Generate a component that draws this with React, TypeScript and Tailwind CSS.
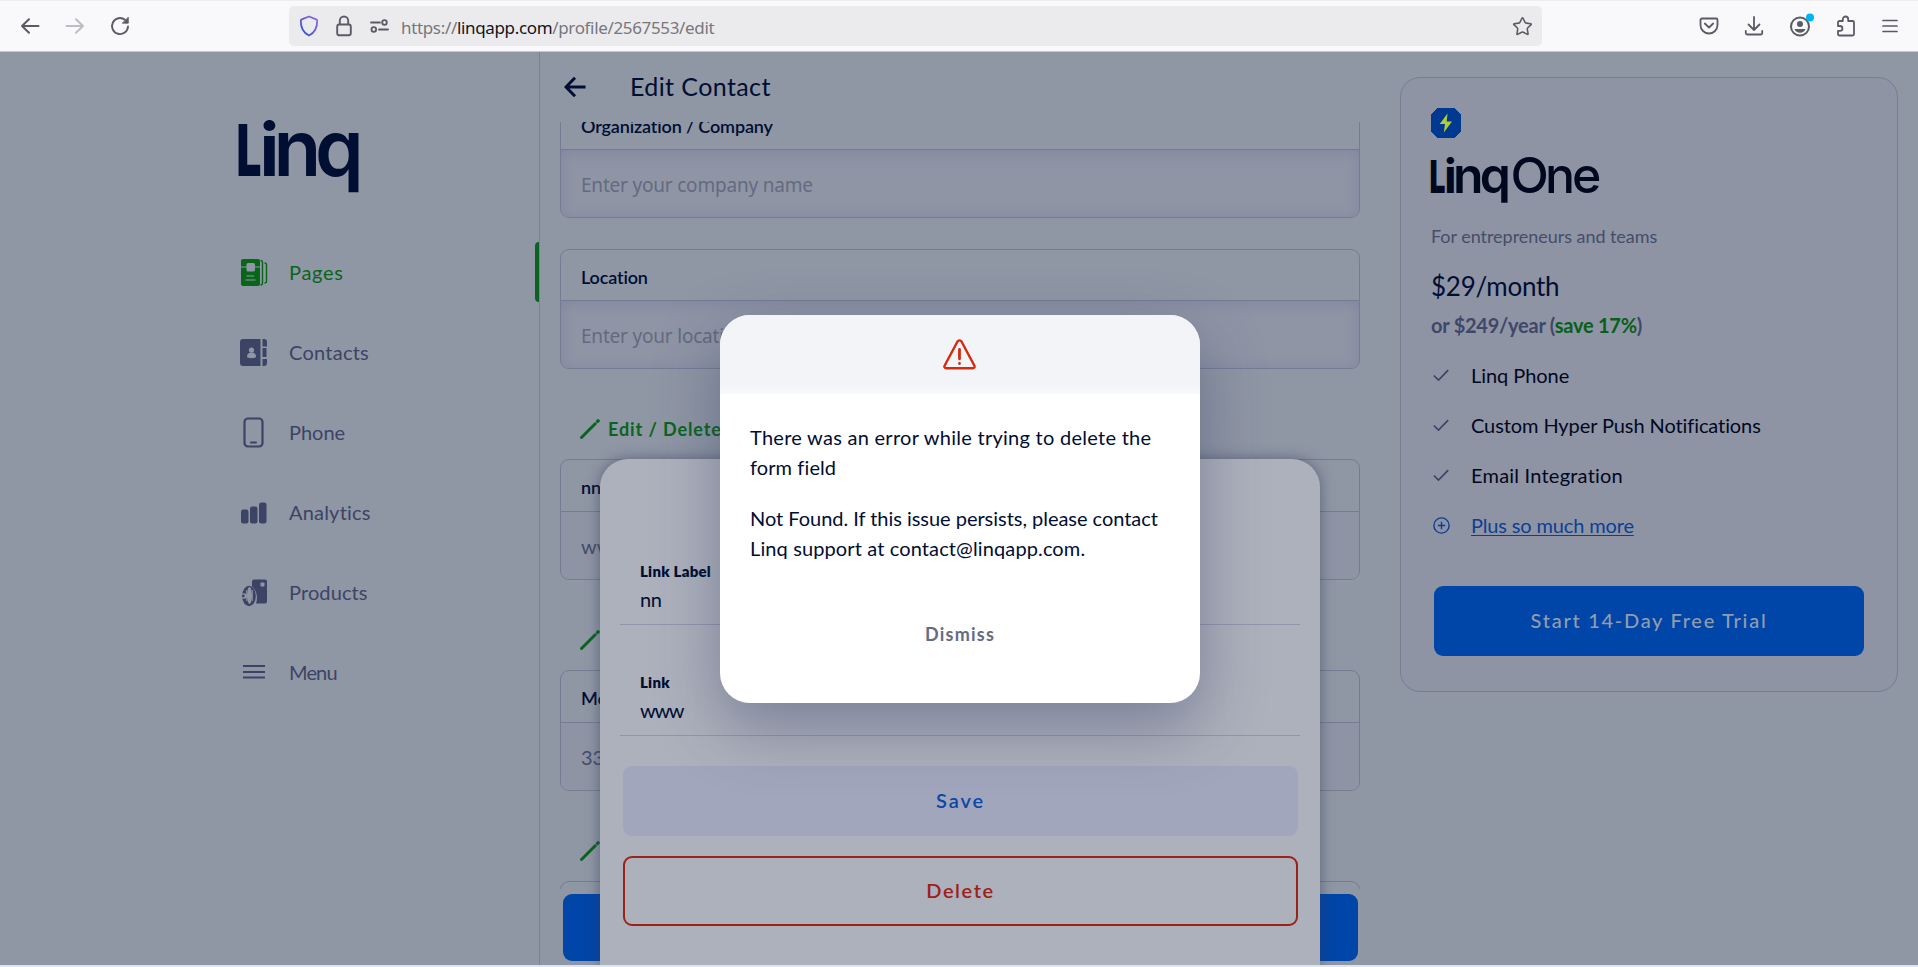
import type { ReactNode } from "react";
import { Star } from "lucide-react";

/* ---------- browser toolbar ---------- */

function Toolbar() {
  return (
    <div className="flex h-[52px] shrink-0 items-center border-t border-b border-t-[#ededf1] border-b-[#c6c7cc] bg-[#f9f9fb] text-[#5b5b66]">
      <div className="flex w-[289px] items-center gap-[25px] pl-[20px]">
        <svg width="20" height="20" viewBox="0 0 20 20" fill="none" stroke="currentColor" strokeWidth="2" strokeLinecap="round" strokeLinejoin="round">
          <path d="M18.5 10H2M9 3.3 2 10l7 6.700" />
        </svg>
        <svg width="20" height="20" viewBox="0 0 20 20" fill="none" stroke="#bdbdc3" strokeWidth="2" strokeLinecap="round" strokeLinejoin="round">
          <path d="M1.500 10H18M11 3.300l7 6.700-7 6.700" />
        </svg>
        <svg width="20" height="20" viewBox="0 0 20 20" fill="none" stroke="currentColor" strokeWidth="1.900" strokeLinecap="round" strokeLinejoin="round">
          <path d="M18 10.500a8 8 0 1 1-3-6.700" />
          <path d="M18.300 1.500v5.700h-5.700z" fill="currentColor" strokeWidth="0.800" />
        </svg>
      </div>
      <div className="flex h-[40px] w-[1253px] items-center rounded-[5px] bg-[#ebebed] pr-[9px] pl-[10px]">
        <svg width="20" height="22" viewBox="0 0 20 22" fill="none" stroke="url(#shieldTone)" strokeWidth="1.800" strokeLinejoin="round">
          <defs>
            <linearGradient id="shieldTone" x1="0" y1="1" x2="1" y2="0">
              <stop offset="0" stopColor="#2f55c8" />
              <stop offset="1" stopColor="#9468dd" />
            </linearGradient>
          </defs>
          <path d="M10 1.500 17.200 4.300a1.500 1.500 0 0 1 1 1.400c.1 6.500-2.400 12-8.200 14.800C4.200 17.700 1.700 12.200 1.800 5.700a1.500 1.500 0 0 1 1-1.400z" />
        </svg>
        <svg className="ml-[17px]" width="16" height="22" viewBox="0 0 16 22" fill="none" stroke="currentColor" strokeWidth="1.900">
          <rect x="1.200" y="9.500" width="13.600" height="10.800" rx="2" />
          <path d="M3.800 9.500V5.700a4.200 4.200 0 0 1 8.400 0v3.800" />
        </svg>
        <svg className="ml-[18px]" width="19" height="14" viewBox="0 0 19 14" fill="none" stroke="currentColor" strokeWidth="1.800" strokeLinecap="round">
          <path d="M1 3.500h9M9 10.500h9" />
          <circle cx="14.500" cy="3.500" r="2.300" />
          <circle cx="3.800" cy="10.500" r="2.300" />
        </svg>
        <div className="ml-[12px] grow pt-[3px] font-['Noto_Sans',sans-serif] text-[17px] leading-[24px] tracking-[-0.34px] text-[#77777d]">
          https://<span className="text-[#15141a]">linqapp.com</span>/profile/2567553/edit
        </div>
        <Star size={21} strokeWidth={1.8} />
      </div>
      <div className="flex grow items-center justify-end gap-[24px] pr-[18px]">
        <svg width="20" height="20" viewBox="0 0 20 20" fill="none" stroke="currentColor" strokeWidth="1.800" strokeLinecap="round" strokeLinejoin="round">
          <path d="M3 2.500h14A1.500 1.500 0 0 1 18.500 4v5a8.500 8.500 0 0 1-17 0V4A1.500 1.500 0 0 1 3 2.500z" />
          <path d="m5.800 7.500 4.200 4 4.200-4" />
        </svg>
        <svg className="ml-[1px]" width="20" height="20" viewBox="0 0 20 20" fill="none" stroke="currentColor" strokeWidth="1.800" strokeLinecap="round" strokeLinejoin="round">
          <path d="M10 1v13M4.500 8.500 10 14l5.500-5.500M1.800 15v2a1.500 1.500 0 0 0 1.500 1.500h13.400a1.500 1.500 0 0 0 1.500-1.500v-2" />
        </svg>
        <svg className="-mt-[3px] ml-[1px]" width="26" height="26" viewBox="0 0 26 26">
          <circle cx="11" cy="14.500" r="9" fill="none" stroke="currentColor" strokeWidth="2" />
          <circle cx="11" cy="12" r="3" fill="currentColor" />
          <path d="M5.500 17h11a5.900 5.900 0 0 1-11 0z" fill="currentColor" />
          <circle cx="21" cy="5.500" r="4" fill="#00b3f4" />
        </svg>
        <svg className="-ml-[3px]" width="20" height="22" viewBox="0 0 20 22" fill="none" stroke="currentColor" strokeWidth="1.800" strokeLinejoin="round">
          <path d="M6.800 6V4.200a2.700 2.700 0 0 1 5.400 0V6H16.500A1.500 1.500 0 0 1 18 7.500V19a1.500 1.500 0 0 1-1.500 1.500h-13A1.500 1.500 0 0 1 2 19v-3.200h2a2.300 2.300 0 0 0 0-4.800H2V7.500A1.500 1.500 0 0 1 3.500 6z" />
        </svg>
        <svg width="20" height="20" viewBox="0 0 20 20" stroke="currentColor" strokeWidth="1.700" strokeLinecap="round">
          <path d="M3 4.500h14M3 10h14M3 15.500h14" />
        </svg>
      </div>
    </div>
  );
}

/* ---------- left navigation ---------- */

function LinqMark() {
  return (
    <g fontFamily="Inter, sans-serif">
      <text transform="translate(1 55.500) scale(0.620 1)" x="-5.500" y="0" fontSize="71" fontWeight="900">
        L
      </text>
      <text y="55.500" fontSize="78" fontWeight="600">
        <tspan x="20.500" fontSize="73" fontWeight="700">
          i
        </tspan>
        <tspan x="34.500">n</tspan>
        <tspan x="76">q</tspan>
      </text>
    </g>
  );
}

const NAV: { label: string; tracking: string; icon: ReactNode }[] = [
  {
    label: "Pages",
    tracking: "tracking-[0.7px]",
    icon: (
      <>
        <rect x="1" y="1" width="19" height="27" rx="2" fill="currentColor" />
        <path d="M1 9h19" stroke="#8f96a4" strokeWidth="1" />
        <rect x="6.500" y="5" width="8.500" height="8.500" rx="1.500" fill="#8f96a4" />
        <path d="M6.500 18h7.500M5.500 22h10" stroke="#8f96a4" strokeWidth="1.200" />
        <path d="M20.500 2.500a2 2 0 0 1 2 2v20.500a2 2 0 0 1-2 2M24.500 5a2 2 0 0 1 2 2v16a2 2 0 0 1-2 2" fill="none" stroke="currentColor" strokeWidth="1.400" />
      </>
    ),
  },
  {
    label: "Contacts",
    tracking: "tracking-[0.25px]",
    icon: (
      <>
        <path d="M3 1h17.500v27H3a3 3 0 0 1-3-3V4a3 3 0 0 1 3-3zM22.500 1h1.500a3 3 0 0 1 3 3v4.500h-4.500zM22.500 10h4v9h-4zM22.500 21H27v4a3 3 0 0 1-3 3h-1.500z" fill="currentColor" />
        <circle cx="11.500" cy="12" r="2.600" fill="#8f96a4" />
        <path d="M7 19c0-3 1.500-4.500 4.500-4.500S16 16 16 19c0 1.500-9 1.500-9 0z" fill="#8f96a4" />
      </>
    ),
  },
  {
    label: "Phone",
    tracking: "tracking-normal",
    icon: (
      <>
        <rect x="4.500" y="0.500" width="18" height="28" rx="3.500" fill="none" stroke="currentColor" strokeWidth="2.200" />
        <path d="M11 24.500h5" stroke="currentColor" strokeWidth="2" strokeLinecap="round" />
      </>
    ),
  },
  {
    label: "Analytics",
    tracking: "tracking-[0.2px]",
    icon: (
      <g fill="currentColor">
        <rect x="1" y="11.500" width="7.500" height="14" rx="2.200" />
        <rect x="10" y="8.500" width="7.500" height="17" rx="2.200" />
        <rect x="19" y="4.500" width="7.500" height="21" rx="2.200" />
      </g>
    ),
  },
  {
    label: "Products",
    tracking: "tracking-[0.1px]",
    icon: (
      <>
        <path d="M14 1.500h11a2 2 0 0 1 2 2v20a2 2 0 0 1-2 2h-9c2-5 1-13-4-17v-5a2 2 0 0 1 2-2z" fill="currentColor" />
        <rect x="20.500" y="4.500" width="4" height="4" rx="0.800" fill="#8f96a4" />
        <ellipse cx="9" cy="18" rx="6.800" ry="10.200" fill="currentColor" />
        <ellipse cx="9.500" cy="17.500" rx="2.500" ry="8.500" fill="#8f96a4" />
        <path d="M6.500 12v11M12.500 12v11" stroke="#8f96a4" strokeWidth="0.800" />
        <circle cx="4" cy="18" r="2.800" fill="#8f96a4" />
        <circle cx="3.300" cy="18" r="1.400" fill="currentColor" />
      </>
    ),
  },
  {
    label: "Menu",
    tracking: "tracking-[-0.85px]",
    icon: <path d="M3 8h22M3 14h22M3 19.500h22" stroke="currentColor" strokeWidth="2" />,
  },
];

function Sidebar() {
  return (
    <nav className="flex w-[540px] shrink-0 flex-col border-r border-[#7b8291] pl-[239px]">
      <svg className="mt-[68px] overflow-visible" width="121" height="74" viewBox="0 0 121 74" fill="#000e33" role="img" aria-label="Linq">
        <LinqMark />
      </svg>
      <div className="mt-[38px] flex flex-col">
        {NAV.map((item, i) => (
          <div key={item.label} className={i === 0 ? "flex h-[80px] items-center text-[#08651a]" : "flex h-[80px] items-center text-[#3c4466]"}>
            <svg width="28" height="29" viewBox="0 0 28 29" className="ml-[1px] overflow-visible">
              {item.icon}
            </svg>
            <span className={`ml-[21px] grow text-[20px] leading-[30px] ${item.tracking}`}>{item.label}</span>
            {i === 0 && <span className="h-[60px] w-[4px] rounded-l-[4px] bg-[#0a6420]" />}
          </div>
        ))}
      </div>
    </nav>
  );
}

/* ---------- contact form ---------- */

function Field({ label, children }: { label: string; children?: ReactNode }) {
  return (
    <div className="h-[120px] shrink-0 overflow-hidden rounded-[9px] border border-[#757c92]">
      <div className="flex h-[51px] items-center border-b border-[#757c92] pt-[4px] pl-[20px] text-[18px] font-semibold tracking-[-0.15px] text-[#000e33]">
        {label}
      </div>
      <div className="flex h-[67px] items-center bg-[#8f95a5] pt-[3px] pl-[20px] font-['Noto_Sans',sans-serif] text-[19px] tracking-[-0.2px] text-[#636b80] shadow-[inset_0_2px_14px_rgba(110,112,155,0.450)]">
        {children}
      </div>
    </div>
  );
}

function FilledField({ label, children }: { label: string; children?: ReactNode }) {
  return (
    <div className="h-[121px] shrink-0 overflow-hidden rounded-[9px] border border-[#757c92]">
      <div className="flex h-[52px] items-center border-b border-[#757c92] pt-[4px] pl-[20px] text-[18px] font-semibold tracking-[-0.15px] text-[#000e33]">
        {label}
      </div>
      <div className="flex h-[67px] items-center bg-[#8e94a4] pt-[1px] pl-[20px] text-[20px] text-[#454d6b]">{children}</div>
    </div>
  );
}

function EditLink() {
  return (
    <div className="flex h-[90px] shrink-0 items-center gap-[8px] pt-[30px] pl-[20px] text-[18px] font-bold tracking-[0.9px] text-[#0a6420]">
      <svg width="20" height="20" viewBox="0 0 20 20" stroke="currentColor" strokeLinecap="round">
        <path d="M1.500 18.500 15.200 4.800" strokeWidth="3" />
        <path d="M17.600 2.400l.5-.5" strokeWidth="3.400" />
      </svg>
      Edit / Delete
    </div>
  );
}

function Form() {
  return (
    <main className="flex w-[840px] shrink-0 flex-col px-[20px]">
      <header className="flex h-[70px] shrink-0 items-center pl-[4px] text-[#000e33]">
        <svg width="22" height="20" viewBox="0 0 22 20" fill="none" stroke="currentColor" strokeWidth="3">
          <path d="M21.500 10H2.500M11 .8 2 10l9 9.200" />
        </svg>
        <h1 className="mb-[2px] ml-[44px] text-[25px] leading-[34px] tracking-[0.4px]">Edit Contact</h1>
      </header>
      <div className="flex h-[767px] shrink-0 flex-col overflow-hidden">
        <div className="-mt-[24px] flex flex-col">
          <Field label="Organization / Company">Enter your company name</Field>
          <div className="h-[31px]" />
          <Field label="Location">Enter your location</Field>
          <EditLink />
          <FilledField label="nn">www</FilledField>
          <EditLink />
          <FilledField label="Mobile">333</FilledField>
          <EditLink />
          <FilledField label="Email" />
        </div>
      </div>
      <div className="mr-[2px] ml-[3px] mt-[5px] h-[67px] rounded-[9px] bg-[#0045a8]" />
    </main>
  );
}

/* ---------- plan card ---------- */

function Check() {
  return (
    <svg width="16" height="13" viewBox="0 0 16 13" fill="none" stroke="#3c4466" strokeWidth="1.700">
      <path d="M.8 6.500 5.500 11 15.200 1.200" />
    </svg>
  );
}

const PERKS: { label: string; tracking: string }[] = [
  { label: "Linq Phone", tracking: "tracking-[-0.05px]" },
  { label: "Custom Hyper Push Notifications", tracking: "tracking-[-0.09px]" },
  { label: "Email Integration", tracking: "tracking-[0.22px]" },
];

function PlanCard() {
  return (
    <aside className="pt-[25px] pl-[20px]">
      <div className="flex h-[615px] w-[498px] flex-col rounded-[20px] border border-[#767e94] bg-[#8e94a4] pl-[30px]">
        <svg className="mt-[30px] shrink-0" width="30" height="30" viewBox="0 0 30 30">
          <path d="M7 0h16l7 7v16l-7 7H7l-7-7V7z" fill="#003a90" stroke="#003a90" strokeLinejoin="round" />
          <path d="M16.500 5.500 8.800 16h5.200l-1.200 8.500L21 13.500h-5.300z" fill="#b4cb3c" />
        </svg>
        <svg className="mt-[19px] shrink-0 overflow-visible" width="170" height="50" viewBox="0 0 170 50" fill="#00081f" role="img" aria-label="Linq One">
          <g transform="translate(0 0.500) scale(0.640)">
            <LinqMark />
          </g>
          <text x="79.500 114 141" y="35.500" fontFamily="Inter, sans-serif" fontSize="50" fontWeight="500">
            One
          </text>
        </svg>
        <p className="mt-[17px] text-[18px] leading-[24px] tracking-[-0.04px] text-[#454d69]">For entrepreneurs and teams</p>
        <p className="mt-[20px] text-[26px] leading-[36px] tracking-[-0.25px] text-[#000e33]">$29/month</p>
        <p className="mt-[6px] text-[20px] leading-[30px] font-bold tracking-[-0.25px] text-[#3f476b]">
          or $249/year (<span className="text-[#07601a]">save 17%</span>)
        </p>
        <ul className="mt-[10px] flex flex-col text-[20px] text-[#00081f]">
          {PERKS.map((perk) => (
            <li key={perk.label} className="flex h-[50px] items-center pl-[2px]">
              <Check />
              <span className={`ml-[22px] leading-[30px] ${perk.tracking}`}>{perk.label}</span>
            </li>
          ))}
          <li className="flex h-[50px] items-center pl-[2px] text-[#0b3f94]">
            <svg width="17" height="17" viewBox="0 0 17 17" fill="none" stroke="currentColor" strokeWidth="1.400">
              <circle cx="8.500" cy="8.500" r="7.600" />
              <path d="M8.500 4.800v7.400M4.800 8.500h7.400" />
            </svg>
            <span className="ml-[21px] leading-[30px] tracking-[-0.15px] underline decoration-1 underline-offset-2">Plus so much more</span>
          </li>
        </ul>
        <button className="mt-[36px] ml-[3px] h-[70px] w-[430px] rounded-[9px] bg-[#0045a8] pb-[3px] text-[20px] font-medium tracking-[1.720px] text-[#929cb0]">
          Start 14-Day Free Trial
        </button>
      </div>
    </aside>
  );
}

/* ---------- overlays ---------- */

function LinkSheet() {
  return (
    <section className="absolute top-[407px] left-[600px] flex h-[506px] w-[720px] flex-col rounded-t-[28px] bg-[#adb1bc] px-[20px] pt-[54px] text-[#000e33] shadow-[0_0_14px_rgba(50,56,90,0.550)]">
      <div className="flex h-[112px] flex-col justify-end border-b border-[#9197aa] pb-[10px] pl-[20px]">
        <label className="text-[15px] leading-[20px] font-extrabold tracking-[0.25px]">Link Label</label>
        <span className="mt-[3px] text-[20px] leading-[30px] tracking-[-0.4px]">nn</span>
      </div>
      <div className="flex h-[111px] flex-col justify-end border-b border-[#9197aa] pb-[10px] pl-[20px]">
        <label className="text-[15px] leading-[20px] font-extrabold tracking-[0.25px]">Link</label>
        <span className="mt-[3px] text-[20px] leading-[30px] tracking-[-1.3px]">www</span>
      </div>
      <button className="mt-[30px] mr-[2px] ml-[3px] h-[70px] rounded-[9px] bg-[#a1a6bd] pb-[2px] text-[20px] font-semibold tracking-[1.900px] text-[#0b48a5]">
        Save
      </button>
      <button className="mt-[20px] mr-[2px] ml-[3px] h-[70px] rounded-[9px] border-2 border-[#9c2118] pb-[2px] text-[20px] font-semibold tracking-[1.600px] text-[#9c2118]">
        Delete
      </button>
    </section>
  );
}

function ErrorDialog() {
  return (
    <section
      role="alertdialog"
      className="absolute top-[263px] left-[720px] flex h-[388px] w-[480px] flex-col overflow-hidden rounded-[30px] bg-white text-[#000e33] shadow-[0_24px_64px_rgba(45,55,95,0.400)]"
    >
      <div className="flex h-[79px] shrink-0 items-center justify-center bg-linear-to-b from-[#f3f4f7] from-88% to-[#f9f9fb]">
        <svg className="-ml-px" width="33" height="31" viewBox="0 0 33 31" fill="none" stroke="#d52b0c" strokeWidth="2.400" strokeLinecap="round" strokeLinejoin="round">
          <path d="M14.500 2.500 1.700 26.500c-.8 1.600.1 2.700 1.600 2.700h26.400c1.500 0 2.400-1.100 1.600-2.700L18.500 2.500c-1-1.500-3-1.500-4 0z" />
          <path d="M16.500 10.500v9.300" strokeWidth="2.800" />
          <path d="M16.500 24.400v.2" strokeWidth="2.800" />
        </svg>
      </div>
      <div className="flex grow flex-col pt-[28px] pl-[30px] text-[20px] leading-[30px]">
        <p className="tracking-[0.27px]">
          There was an error while trying to delete the
          <br />
          <span className="tracking-[0.1px]">form field</span>
        </p>
        <p className="mt-[21px]">
          <span className="tracking-[-0.03px]">Not Found. If this issue persists, please contact</span>
          <br />
          <span className="tracking-[0.12px]">Linq support at contact@linqapp.com.</span>
        </p>
      </div>
      <button className="mb-[54px] h-[30px] text-[18px] leading-[30px] font-bold tracking-[1.250px] text-[#656b85]">Dismiss</button>
    </section>
  );
}

export default function App() {
  return (
    <div className="flex h-[967px] w-[1918px] flex-col overflow-hidden bg-[#dde3f2] font-[Lato,sans-serif]">
      <Toolbar />
      <div className="relative flex h-[913px] shrink-0 overflow-hidden bg-[#8f96a4]">
        <Sidebar />
        <Form />
        <PlanCard />
        <LinkSheet />
        <ErrorDialog />
      </div>
    </div>
  );
}
